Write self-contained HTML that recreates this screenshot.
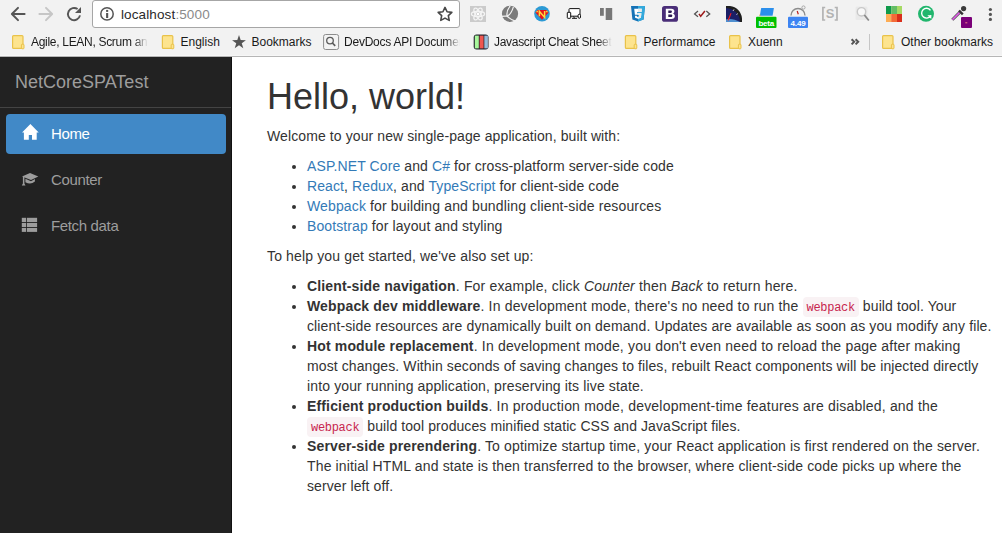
<!DOCTYPE html>
<html><head><meta charset="utf-8">
<style>
*{box-sizing:border-box}
html,body{margin:0;padding:0;width:1002px;height:533px;overflow:hidden;background:#fff;font-family:"Liberation Sans",sans-serif}
#chrome{position:absolute;left:0;top:0;width:1002px;height:57px;background:#f2f2f2}
#chrome .line{position:absolute;left:0;top:56px;width:1002px;height:1px;background:#b9b9b9}
#chrome .abs{position:absolute}
.omni{position:absolute;left:92px;top:0;width:368px;height:28px;background:#fff;border:1px solid #a9a9a9;border-top-color:#c3c3c3;border-radius:0 0 3px 3px;border-top-left-radius:2px;border-top-right-radius:2px}
.url{position:absolute;left:121px;top:6.5px;font-size:13.5px;color:#2a2a2a;white-space:nowrap;letter-spacing:0.12px}
.url span{color:#8a8a8a}
.badge{position:absolute;top:17.5px;height:11px;font-size:8px;font-weight:bold;line-height:11px;color:#fff;text-align:center;letter-spacing:-0.2px}
.sS{position:absolute;left:825px;top:6px;font-size:13px;font-weight:bold;line-height:16px;color:#b3b3b3;width:10px;text-align:center}
.bm{position:absolute;top:35px;font-size:12px;color:#1a1a1a;white-space:nowrap;line-height:14px}
.folder{position:absolute;top:35px;width:12px;height:14px;background:#fde28a;border:1px solid #e8bf3f;border-radius:1px}
.folder:after{content:"";position:absolute;right:-1px;bottom:-1px;width:4px;height:5px;border:1px solid #e8bf3f;background:#fde28a}
.fade{-webkit-mask-image:linear-gradient(to right,#000 calc(100% - 14px),transparent 100%);overflow:hidden}

#side{position:absolute;left:0;top:57px;width:232px;height:476px;background:#222;border-right:1px solid #111}
.brand{position:absolute;left:15px;top:15px;font-size:18px;line-height:20px;color:#9d9d9d}
.sep{position:absolute;left:0;top:50px;width:231px;height:1px;background:#444}
.pill{position:absolute;left:6px;width:220px;height:40px;border-radius:4px;font-size:15px;line-height:20px;padding:10px 16px;color:#9d9d9d}
.pill.active{background:#4189c7;color:#fff}
.pill .ic{position:absolute;left:16px;top:12px;width:16px;height:16px}
.pill .tx{position:absolute;left:45px;top:10px;letter-spacing:-0.35px}

#main{position:absolute;left:267px;top:57px;width:726px;color:#333;font-size:14px;line-height:20px}
h1{font-size:36px;line-height:1.1;font-weight:500;margin:20px 0 10px 0}
p{margin:0 0 10px;position:relative;top:-1px;letter-spacing:0.1px}
ul{margin:0 0 10px;padding-left:40px;position:relative;top:-1px;letter-spacing:0.1px}
a{color:#337ab7;text-decoration:none}
code{font-family:"Liberation Mono",monospace;font-size:12px;line-height:10px;padding:3.5px 4px 2.5px 4px;color:#c7254e;background:#f9f2f4;border-radius:4px;letter-spacing:-0.3px}
.nw li{white-space:nowrap}
b{font-weight:bold;letter-spacing:0.15px}
</style></head>
<body>
<div id="chrome">
<svg id="chromesvg" width="1002" height="57" style="position:absolute;left:0;top:0">
<!-- nav -->
<path d="M24.6 14H12.6M18 7.9L11.9 14 18 20.1" fill="none" stroke="#555" stroke-width="2" stroke-linecap="round" stroke-linejoin="round"/>
<path d="M39.4 14H51.4M46 7.9L52.1 14 46 20.1" fill="none" stroke="#c6c6c6" stroke-width="2" stroke-linecap="round" stroke-linejoin="round"/>
<path d="M80 15.4A6.1 6.1 0 1 1 77.6 9.1" fill="none" stroke="#555" stroke-width="1.9"/>
<path d="M75 12.9H81V6.9Z" fill="#555"/>
<!-- omnibox -->
<rect x="92.5" y="0.5" width="367" height="27" rx="2.5" fill="#fff" stroke="#a6a6a6"/>
<circle cx="107" cy="13.9" r="6.2" fill="none" stroke="#555" stroke-width="1.5"/>
<rect x="106.1" y="13" width="2.1" height="5" fill="#555"/>
<rect x="106.1" y="9.9" width="2.1" height="2" fill="#555"/>
<path d="M445.00 7.40 L447.06 11.77 L451.85 12.38 L448.33 15.68 L449.23 20.42 L445.00 18.10 L440.77 20.42 L441.67 15.68 L438.15 12.38 L442.94 11.77Z" fill="none" stroke="#484848" stroke-width="1.6" stroke-linejoin="round"/>
<!-- react -->
<rect x="470" y="6" width="16" height="16" fill="#cbcbcb"/>
<g fill="none" stroke="#f4f4f4" stroke-width="1.3"><ellipse cx="478" cy="14" rx="6.6" ry="2.5"/><ellipse cx="478" cy="14" rx="6.6" ry="2.5" transform="rotate(60 478 14)"/><ellipse cx="478" cy="14" rx="6.6" ry="2.5" transform="rotate(120 478 14)"/></g>
<circle cx="478" cy="14" r="1.3" fill="#fff"/>
<!-- circle logo -->
<circle cx="510" cy="13.8" r="8.1" fill="#7b7b7b"/>
<path d="M510.2 5.8C507.6 9.3 506.4 13.3 507.2 16.2C509.6 15 512.2 11 513.4 6.9M501.5 16.3C503.5 16.1 505.5 16 507.2 16.2C509.5 18.4 512.2 20.2 516 21.4" fill="none" stroke="#f2f2f2" stroke-width="1.2"/>
<!-- superman -->
<circle cx="542" cy="13.8" r="7.8" fill="#2c9ad5"/>
<path d="M537.5 10.1H546.5L548.6 12.4 542 19.7 535.4 12.4Z" fill="#e4141c"/>
<path d="M537.2 10.6L535.9 12.3 538.6 12.3Z" fill="#ffd83d"/>
<path d="M546.8 10.6L548.1 12.3 545.4 12.3Z" fill="#ffd83d"/>
<path d="M539.4 16.2V11.2L544.6 17.4V11" fill="none" stroke="#ffd83d" stroke-width="1.5"/>
<!-- devices -->
<rect x="569" y="8.6" width="11" height="7.6" rx="0.8" fill="#fff" stroke="#111" stroke-width="1"/>
<rect x="567.3" y="12.3" width="3.4" height="6" rx="0.6" fill="#fff" stroke="#111" stroke-width="1"/>
<rect x="578.1" y="14.2" width="2.4" height="4.1" rx="1.2" fill="#fff" stroke="#111" stroke-width="1"/>
<path d="M572 18.3H577M573.5 16.5L574.5 18.3" stroke="#111" stroke-width="1"/>
<!-- blocks -->
<rect x="600" y="8" width="3.8" height="7.8" fill="#777"/>
<rect x="605.7" y="8" width="6.5" height="12" fill="#777"/>
<!-- css3 -->
<path d="M631 6H645L643.6 19.6 638 21.5 632.4 19.6Z" fill="#1572b6"/>
<path d="M638 6H645L643.6 19.6 638 21.5Z" fill="#33a9dc"/>
<path d="M634.2 8.8H641.8L641.5 12H637.3L637.2 13.2H641.4L640.9 17.8 638 18.8 635.1 17.8 635 15.8H636.8L636.9 16.6 638 17 639.2 16.6 639.4 14.8H634.9Z" fill="#fff"/>
<path d="M638 8.8H641.8L641.5 12H638ZM638 13.2H641.4L640.9 17.8 638 18.8V17L639.2 16.6 639.4 14.8H638Z" fill="#ebebeb"/>
<!-- bootstrap -->
<rect x="662" y="6" width="16" height="15.8" rx="2.6" fill="#4a2e78"/>
<path d="M665.8 8.7H671.2C673.4 8.7 674.4 9.7 674.4 11.2 674.4 12.3 673.7 13.1 672.8 13.5 674 13.8 674.9 14.8 674.9 16.1 674.9 18 673.6 19 671.3 19H665.8Z" fill="#fff"/>
<path d="M668.3 10.6V12.9H670.7C671.5 12.9 671.9 12.4 671.9 11.8 671.9 11.1 671.5 10.6 670.7 10.6ZM668.3 14.6V17.1H670.9C671.8 17.1 672.3 16.6 672.3 15.8 672.3 15.1 671.8 14.6 670.9 14.6Z" fill="#2e1a55"/>
<!-- validator -->
<path d="M698 11.1L694.6 13.9 698 16.7M706.3 11.1L709.7 13.9 706.3 16.7" fill="none" stroke="#555" stroke-width="1.3"/>
<path d="M699 13.8L700.7 16.3 704.9 11" fill="none" stroke="#9e1b1b" stroke-width="1.5"/>
<!-- gauge -->
<path d="M726 6H730C736.5 6.5 741.5 12 742 18.5V22H726Z" fill="#1f1f1f"/>
<path d="M726 8C734 8.5 740 14 740 22H726Z" fill="#1b1f66"/>
<path d="M726 19.5C730 18.5 735 19.2 740 22H726Z" fill="#4f8fd0"/>
<path d="M727.6 20.2L730.6 12.9 731.5 13.3 728.8 20.6Z" fill="#ff1b1b"/>
<path d="M733 11L734 9.4M736.4 14.6L737.8 13.6" stroke="#ddd" stroke-width="0.9"/>
<!-- blue folder + beta -->
<path d="M761.2 8H773.9L772.6 15.7H759.8Z" fill="#2b8fec"/>
<path d="M760 14L759 15.7H760.5Z" fill="#e9a93a"/>
<rect x="756" y="16.8" width="20.5" height="11.2" rx="1" fill="#00c000"/>
<!-- stopwatch + 4.49 -->
<path d="M791 15.5A7 7 0 0 1 805 15.5" fill="none" stroke="#8c8c8c" stroke-width="1.4"/>
<circle cx="803.5" cy="7.5" r="1.6" fill="none" stroke="#999" stroke-width="0.8"/>
<path d="M797.2 11L798.3 14.2" stroke="#b22" stroke-width="1.2"/>
<rect x="788" y="16.8" width="20" height="11.2" rx="1" fill="#3d84f2"/>
<!-- [S] -->
<path d="M825.2 7.5H822.9V20H825.2M834.7 7.5H837V20H834.7" fill="none" stroke="#b3b3b3" stroke-width="1.7"/>
<!-- magnifier -->
<rect x="855.5" y="6.5" width="12" height="13.5" rx="1.5" fill="#e9e9e9"/>
<circle cx="861.5" cy="11.8" r="4.2" fill="#f8f8f8" stroke="#c8c8c8" stroke-width="1.4"/>
<path d="M864.4 15L868.8 20.5" stroke="#8a8a8a" stroke-width="1.8"/>
<!-- grid -->
<rect x="886" y="6" width="5.2" height="8" fill="#0f9a4b"/><rect x="891.2" y="6" width="5.8" height="8" fill="#64bd65"/><rect x="897" y="6" width="5" height="8" fill="#a6da64"/>
<rect x="886" y="14" width="5.2" height="8" fill="#fdad55"/><rect x="891.2" y="14" width="5.8" height="8" fill="#f46b37"/><rect x="897" y="14" width="5" height="8" fill="#d92f1c"/>
<!-- grammarly -->
<circle cx="926" cy="13.8" r="8" fill="#21b66d"/>
<path d="M930.5 10.3A4.9 4.9 0 1 0 930.9 15.4" fill="none" stroke="#fff" stroke-width="1.4"/>
<path d="M927.4 15.2H931.3V19.1Z" fill="#fff"/>
<!-- eyedropper -->
<path d="M952.3 19.8L960.5 11.6" stroke="#555" stroke-width="3"/>
<path d="M952.3 19.8L960.5 11.6" stroke="#e05ce8" stroke-width="1.6"/>
<path d="M959 10.5L962.8 14.3" stroke="#333" stroke-width="2.4"/>
<circle cx="963.6" cy="8.6" r="2.6" fill="#3a3a3a"/>
<rect x="961" y="17.1" width="11" height="10.9" rx="1" fill="#7a0078"/>
<rect x="965.3" y="22.3" width="2" height="1" fill="#f08080"/>
<!-- menu -->
<circle cx="990.4" cy="9.5" r="1.6" fill="#555"/><circle cx="990.4" cy="14.4" r="1.6" fill="#555"/><circle cx="990.4" cy="19.4" r="1.6" fill="#555"/>
<!-- bookmarks -->
<rect x="12.6" y="35.6" width="10.4" height="12.8" rx="1" fill="#fde48e" stroke="#e9c24a" stroke-width="1.2"/><rect x="21.4" y="44.2" width="2.6" height="4.6" rx="0.8" fill="#fde48e" stroke="#e9c24a" stroke-width="1"/>
<rect x="162.4" y="35.6" width="10.4" height="12.8" rx="1" fill="#fde48e" stroke="#e9c24a" stroke-width="1.2"/><rect x="171.20000000000002" y="44.2" width="2.6" height="4.6" rx="0.8" fill="#fde48e" stroke="#e9c24a" stroke-width="1"/>
<path d="M239.00 35.10 L240.70 40.05 L245.94 40.14 L241.76 43.30 L243.29 48.31 L239.00 45.30 L234.71 48.31 L236.24 43.30 L232.06 40.14 L237.30 40.05Z" fill="#555"/>
<rect x="323.6" y="34.5" width="15" height="15" rx="2" fill="#f3f3f3" stroke="#8c8c8c" stroke-width="1"/>
<circle cx="330" cy="40.6" r="3.3" fill="none" stroke="#5a5a5a" stroke-width="1.3"/>
<path d="M332.4 43L335.2 45.8" stroke="#5a5a5a" stroke-width="1.7"/>
<rect x="473.7" y="34.6" width="14.8" height="14.8" rx="3" fill="#1e1e2a"/>
<rect x="474.8" y="35.6" width="4" height="12.8" fill="#a9f79c"/>
<rect x="479.6" y="35.6" width="4" height="12.8" fill="#ef5650"/>
<rect x="484.3" y="35.6" width="3.6" height="12.8" fill="#97bbd9"/>
<rect x="625.4" y="35.6" width="10.4" height="12.8" rx="1" fill="#fde48e" stroke="#e9c24a" stroke-width="1.2"/><rect x="634.1999999999999" y="44.2" width="2.6" height="4.6" rx="0.8" fill="#fde48e" stroke="#e9c24a" stroke-width="1"/>
<rect x="729.6" y="35.6" width="10.4" height="12.8" rx="1" fill="#fde48e" stroke="#e9c24a" stroke-width="1.2"/><rect x="738.4" y="44.2" width="2.6" height="4.6" rx="0.8" fill="#fde48e" stroke="#e9c24a" stroke-width="1"/>
<path d="M851.6 39.2L854.2 41.8 851.6 44.4M855.6 39.2L858.2 41.8 855.6 44.4" fill="none" stroke="#555" stroke-width="2"/>
<rect x="869" y="34" width="1" height="16" fill="#c6c6c6"/>
<rect x="882.6" y="35.6" width="10.4" height="12.8" rx="1" fill="#fde48e" stroke="#e9c24a" stroke-width="1.2"/><rect x="891.4" y="44.2" width="2.6" height="4.6" rx="0.8" fill="#fde48e" stroke="#e9c24a" stroke-width="1"/>
<rect x="0" y="55" width="1002" height="1" fill="#f7f7f7"/>
<rect x="0" y="56" width="1002" height="1" fill="#b6b6b6"/>
</svg>
  <div class="url">localhost<span>:5000</span></div>
  <div class="badge" style="left:756px;width:20.5px">beta</div>
  <div class="badge" style="left:788px;width:20px">4.49</div>
  <div class="sS">S</div>
  <div class="bm fade" style="left:31px;width:117px;letter-spacing:-0.3px">Agile, LEAN, Scrum and more</div>
  <div class="bm" style="left:180.5px">English</div>
  <div class="bm" style="left:251.5px">Bookmarks</div>
  <div class="bm fade" style="left:344px;width:116px;letter-spacing:-0.23px">DevDocs API Documentation</div>
  <div class="bm fade" style="left:494px;width:118px;letter-spacing:-0.3px">Javascript Cheat Sheet</div>
  <div class="bm" style="left:643.5px">Performamce</div>
  <div class="bm" style="left:748px">Xuenn</div>
  <div class="bm" style="left:901px">Other bookmarks</div>
</div>

<div id="side">
  <div class="brand">NetCoreSPATest</div>
  <div class="sep"></div>
  <div class="pill active" style="top:57px"><span class="tx">Home</span></div>
  <div class="pill" style="top:103px"><span class="tx">Counter</span></div>
  <div class="pill" style="top:149px"><span class="tx">Fetch data</span></div>
</div>

<svg width="1002" height="533" style="position:absolute;left:0;top:0;pointer-events:none">
<path d="M30.4 124L38.7 132.6H36.7V139.8H32V135.1H28.8V139.8H23.9V132.6H22.05Z" fill="#fff"/>
<g fill="#9d9d9d">
<path d="M22 176.5L30 173.1 38.3 176.5 31 179.9Z"/>
<path d="M25.4 178.8L31 181.2 34.9 179.1V181.6Q30.5 185.2 25.4 182.2Z"/>
<rect x="22.9" y="177" width="1.5" height="6.5"/>
<path d="M21.8 185.6L23.6 182.3 25.5 185.6Z"/>
<rect x="21.8" y="217.8" width="4.3" height="4.2"/><rect x="26.9" y="217.8" width="10.2" height="4.2"/>
<rect x="21.8" y="222.9" width="4.3" height="4.1"/><rect x="26.9" y="222.9" width="10.2" height="4.1"/>
<rect x="21.8" y="227.9" width="4.3" height="4"/><rect x="26.9" y="227.9" width="10.2" height="4"/>
</g>
</svg>
<div id="main">
<h1>Hello, world!</h1>
<p>Welcome to your new single-page application, built with:</p>
<ul>
<li><a>ASP.NET Core</a> and <a>C#</a> for cross-platform server-side code</li>
<li><a>React</a>, <a>Redux</a>, and <a>TypeScript</a> for client-side code</li>
<li style="letter-spacing:0.136px"><a>Webpack</a> for building and bundling client-side resources</li>
<li><a>Bootstrap</a> for layout and styling</li>
</ul>
<p style="letter-spacing:0.146px">To help you get started, we've also set up:</p>
<ul class="nw">
<li><span class="ln" style="letter-spacing:0.174px"><b>Client-side navigation</b>. For example, click <em>Counter</em> then <em>Back</em> to return here.</span></li>
<li><span class="ln" style="letter-spacing:0.178px"><b>Webpack dev middleware</b>. In development mode, there's no need to run the <code>webpack</code><span style="letter-spacing:0.1px"> build tool. Your</span></span><br><span class="ln" style="letter-spacing:0.12px">client-side resources are dynamically built on demand. Updates are available as soon as you modify any file.</span></li>
<li><span class="ln" style="letter-spacing:0.18px"><b>Hot module replacement</b>. In development mode, you don't even need to reload the page after making</span><br><span class="ln" style="letter-spacing:0.1px">most changes. Within seconds of saving changes to files, rebuilt React components will be injected directly</span><br><span class="ln" style="letter-spacing:0.135px">into your running application, preserving its live state.</span></li>
<li><span class="ln" style="letter-spacing:0.2px"><b>Efficient production builds</b>. In production mode, development-time features are disabled, and the</span><br><span class="ln" style="letter-spacing:0.084px"><code>webpack</code> build tool produces minified static CSS and JavaScript files.</span></li>
<li><span class="ln" style="letter-spacing:0.145px"><b>Server-side prerendering</b>. To optimize startup time, your React application is first rendered on the server.</span><br><span class="ln" style="letter-spacing:0.148px">The initial HTML and state is then transferred to the browser, where client-side code picks up where the</span><br><span class="ln" style="letter-spacing:0.1px">server left off.</span></li>
</ul>
</div>
</body></html>
